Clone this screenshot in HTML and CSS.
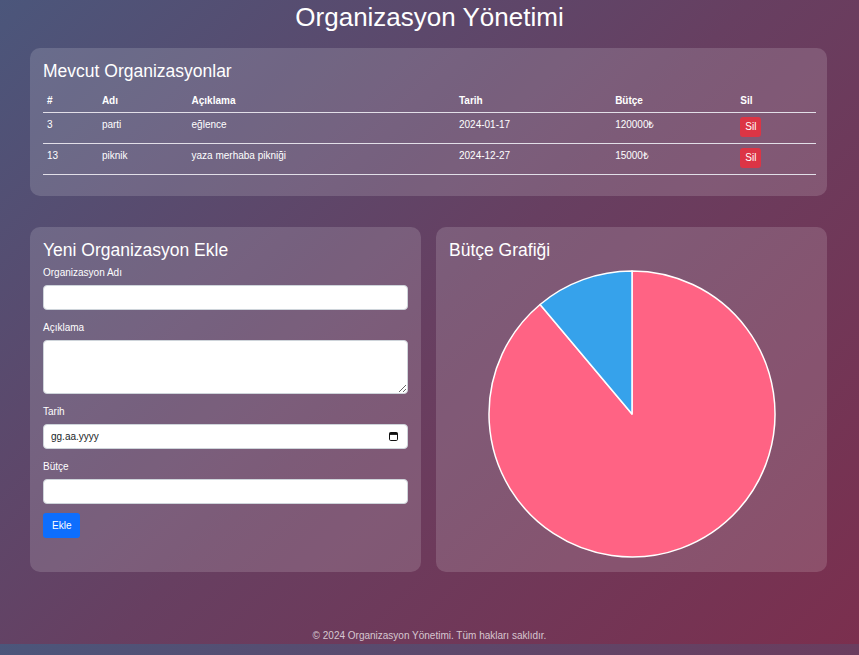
FILE: index.html
```html
<!DOCTYPE html>
<html lang="tr">
<head>
<meta charset="utf-8">
<title>Organizasyon Yönetimi</title>
<link rel="stylesheet" href="styles.css">
</head>
<body>
<h1 class="page-title">Organizasyon Yönetimi</h1>
<main class="container">
  <section class="card list-card">
    <h2 class="card-title">Mevcut Organizasyonlar</h2>
    <table class="org-table">
      <thead>
        <tr>
          <th class="c-id">#</th>
          <th class="c-name">Adı</th>
          <th class="c-desc">Açıklama</th>
          <th class="c-date">Tarih</th>
          <th class="c-budget">Bütçe</th>
          <th class="c-del">Sil</th>
        </tr>
      </thead>
      <tbody>
        <tr>
          <td>3</td>
          <td>parti</td>
          <td>eğlence</td>
          <td>2024-01-17</td>
          <td>120000₺</td>
          <td><button class="btn btn-danger">Sil</button></td>
        </tr>
        <tr>
          <td>13</td>
          <td>piknik</td>
          <td>yaza merhaba pikniği</td>
          <td>2024-12-27</td>
          <td>15000₺</td>
          <td><button class="btn btn-danger">Sil</button></td>
        </tr>
      </tbody>
    </table>
  </section>

  <div class="row">
    <section class="card form-card">
      <h2 class="card-title form-title">Yeni Organizasyon Ekle</h2>
      <div class="field">
        <label class="field-label">Organizasyon Adı</label>
        <input class="input" type="text">
      </div>
      <div class="field">
        <label class="field-label">Açıklama</label>
        <textarea class="input textarea"></textarea>
      </div>
      <div class="field">
        <label class="field-label">Tarih</label>
        <div class="input date-input">
          <span class="date-text">gg.aa.yyyy</span>
          <svg class="cal-icon" width="9" height="9" viewBox="0 0 9 9">
            <rect x="0.5" y="0.5" width="8" height="8" rx="1.2" fill="none" stroke="#111" stroke-width="1"/>
            <rect x="0.5" y="0.5" width="8" height="2.4" fill="#111"/>
          </svg>
        </div>
      </div>
      <div class="field">
        <label class="field-label">Bütçe</label>
        <input class="input" type="text">
      </div>
      <button class="btn btn-primary">Ekle</button>
    </section>

    <section class="card chart-card">
      <h2 class="card-title">Bütçe Grafiği</h2>
      <div class="chart">
        <svg width="290" height="290" viewBox="0 0 290 290">
          <path d="M145,145 L145,2 A143,143 0 1 1 53.08,35.46 Z" fill="#ff6384" stroke="#fff" stroke-width="1.5" stroke-linejoin="round"/>
          <path d="M145,145 L53.08,35.46 A143,143 0 0 1 145,2 Z" fill="#36a2eb" stroke="#fff" stroke-width="1.5" stroke-linejoin="round"/>
        </svg>
      </div>
    </section>
  </div>
</main>
<footer class="footer">© 2024 Organizasyon Yönetimi. Tüm hakları saklıdır.</footer>
</body>
</html>
```

FILE: styles.css
```css
html {
  margin: 0;
}
body {
  margin: 0;
  font-family: "Liberation Sans", Arial, sans-serif;
  color: #fff;
  background: linear-gradient(135deg, #4b567b 0%, #673f61 50%, #7b2f4e 100%);
}
.page-title {
  margin: 0;
  padding-top: 2px;
  font-size: 26px;
  line-height: 31px;
  font-weight: normal;
  text-align: center;
}
.container {
  margin: 15px 32px 0 30px;
}
.card {
  background: rgba(255, 255, 255, 0.15);
  border-radius: 10px;
  padding: 13px;
  box-sizing: border-box;
}
.card-title {
  margin: 0 0 8px;
  font-size: 17.5px;
  line-height: 21px;
  font-weight: normal;
}
.org-table {
  width: calc(100% + 2px);
  border-collapse: collapse;
  font-size: 10px;
  line-height: 12px;
  margin-bottom: 8px;
}
.org-table th,
.org-table td {
  text-align: left;
  vertical-align: top;
  border-bottom: 1px solid #e2dfe8;
}
.org-table th {
  font-weight: bold;
  padding: 5px 4px;
}
.org-table td {
  padding: 6px 4px 4px;
}
.c-id { width: 7.1%; }
.c-name { width: 11.6%; }
.c-desc { width: 34.6%; }
.c-date { width: 20.2%; }
.c-budget { width: 16.2%; }
.btn {
  font-family: "Liberation Sans", Arial, sans-serif;
  font-size: 10px;
  color: #fff;
  border: none;
  border-radius: 3px;
  cursor: pointer;
}
.btn-danger {
  background: #dc3545;
  padding: 4px 5px;
  line-height: 12px;
  display: block;
  margin: -2px 0 2px;
}
.row {
  margin-top: 31px;
  display: grid;
  grid-template-columns: 1fr 1fr;
  gap: 15px;
}
.form-title {
  margin-bottom: 6px;
}
.field {
  margin-bottom: 12px;
}
.field-label {
  display: block;
  font-size: 10px;
  line-height: 12px;
  margin-bottom: 6px;
}
.input {
  display: block;
  width: 100%;
  height: 25px;
  box-sizing: border-box;
  background: #fff;
  border: 1px solid #ced4da;
  border-radius: 4px;
  padding: 0 7px;
  font-family: "Liberation Sans", Arial, sans-serif;
  font-size: 10px;
  color: #212529;
  margin: 0;
}
.textarea {
  height: 54px;
  resize: both;
}
.date-input {
  display: flex;
  align-items: center;
  justify-content: space-between;
  padding: 0 9px 0 7px;
}
.date-text {
  font-size: 10px;
  color: #212529;
}
.cal-icon {
  display: block;
}
.btn-primary {
  background: #0d6efd;
  padding: 6px 9px;
  line-height: 13px;
  display: block;
  margin-top: -3px;
}
.chart {
  margin-top: 1px;
  display: flex;
  justify-content: center;
}
.chart svg {
  display: block;
}
.footer {
  margin-top: 58px;
  padding-bottom: 2px;
  text-align: center;
  font-size: 10px;
  line-height: 12px;
  color: rgba(255, 255, 255, 0.72);
}
```
